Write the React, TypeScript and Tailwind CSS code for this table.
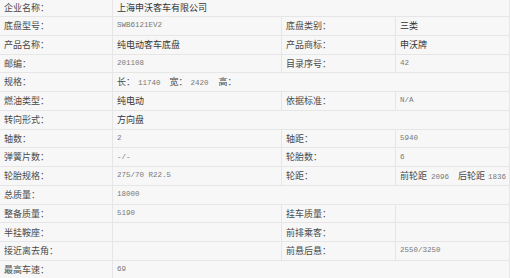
const cjk = "font-['SimSun','Noto_Sans_CJK_SC',sans-serif]";

type Cell = { text?: string; mono?: boolean; node?: React.ReactNode };
type Row = { label: string; value: Cell; label2?: string; value2?: Cell };

const rows: Row[] = [
  { label: "企业名称：", value: { text: "上海申沃客车有限公司" } },
  { label: "底盘型号：", value: { text: "SWB6121EV2", mono: true }, label2: "底盘类别：", value2: { text: "三类" } },
  { label: "产品名称：", value: { text: "纯电动客车底盘" }, label2: "产品商标：", value2: { text: "申沃牌" } },
  { label: "邮编：", value: { text: "201108", mono: true }, label2: "目录序号：", value2: { text: "42", mono: true } },
  {
    label: "规格：",
    value: {
      node: (
        <span className="flex items-center">
          长：<span className="ml-[3px]"><Num>11740</Num></span>
          <span className="ml-[9px]">宽：</span>
          <span className="ml-[3px]"><Num>2420</Num></span>
          <span className="ml-[10px]">高：</span>
        </span>
      ),
    },
  },
  { label: "燃油类型：", value: { text: "纯电动" }, label2: "依据标准：", value2: { text: "N/A", mono: true } },
  { label: "转向形式：", value: { text: "方向盘" } },
  { label: "轴数：", value: { text: "2", mono: true }, label2: "轴距：", value2: { text: "5940", mono: true } },
  { label: "弹簧片数：", value: { text: "-/-", mono: true }, label2: "轮胎数：", value2: { text: "6", mono: true } },
  {
    label: "轮胎规格：",
    value: { text: "275/70 R22.5", mono: true },
    label2: "轮距：",
    value2: {
      node: (
        <span className="flex items-center whitespace-nowrap">
          前轮距<span className="ml-[4px]"><Num>2096</Num></span>
          <span className="ml-[9px]">后轮距</span>
          <span className="ml-[3px]"><Num>1836</Num></span>
        </span>
      ),
    },
  },
  { label: "总质量：", value: { text: "18000", mono: true } },
  { label: "整备质量：", value: { text: "5190", mono: true }, label2: "挂车质量：", value2: {} },
  { label: "半挂鞍座：", value: {}, label2: "前排乘客：", value2: {} },
  { label: "接近离去角：", value: {}, label2: "前悬后悬：", value2: { text: "2550/3250", mono: true } },
  { label: "最高车速：", value: { text: "69", mono: true } },
];

function Num({ children }: { children: React.ReactNode }) {
  return <span className="font-['Liberation_Mono',monospace] text-[7.5px] text-[#777]">{children}</span>;
}

function Value({ cell }: { cell: Cell }) {
  if (cell.node) return <>{cell.node}</>;
  if (!cell.text) return null;
  if (cell.mono) return <Num>{cell.text}</Num>;
  return <span className="text-[#333]">{cell.text}</span>;
}

const td = "flex items-center px-[4px] border-r border-[#e6e6e6] overflow-hidden whitespace-nowrap";

export default function App() {
  return (
    <div className={`w-[510px] h-[278px] overflow-hidden bg-white ${cjk} text-[9px] text-[#4a4a4a]`}>
      {rows.map((r, i) => (
        <div
          key={r.label}
          className={`grid grid-cols-[113px_169px_114px_114px] ${i === 0 ? "h-[17px]" : "h-[18.77px]"} border-b border-[#e6e6e6] bg-[#f7f7f7]`}
        >
          <div className={td}>{r.label}</div>
          {r.label2 !== undefined ? (
            <>
              <div className={td}>
                <Value cell={r.value} />
              </div>
              <div className={td}>{r.label2}</div>
              <div className={td}>
                <Value cell={r.value2 ?? {}} />
              </div>
            </>
          ) : (
            <div className={`${td} col-span-3`}>
              <Value cell={r.value} />
            </div>
          )}
        </div>
      ))}
    </div>
  );
}
